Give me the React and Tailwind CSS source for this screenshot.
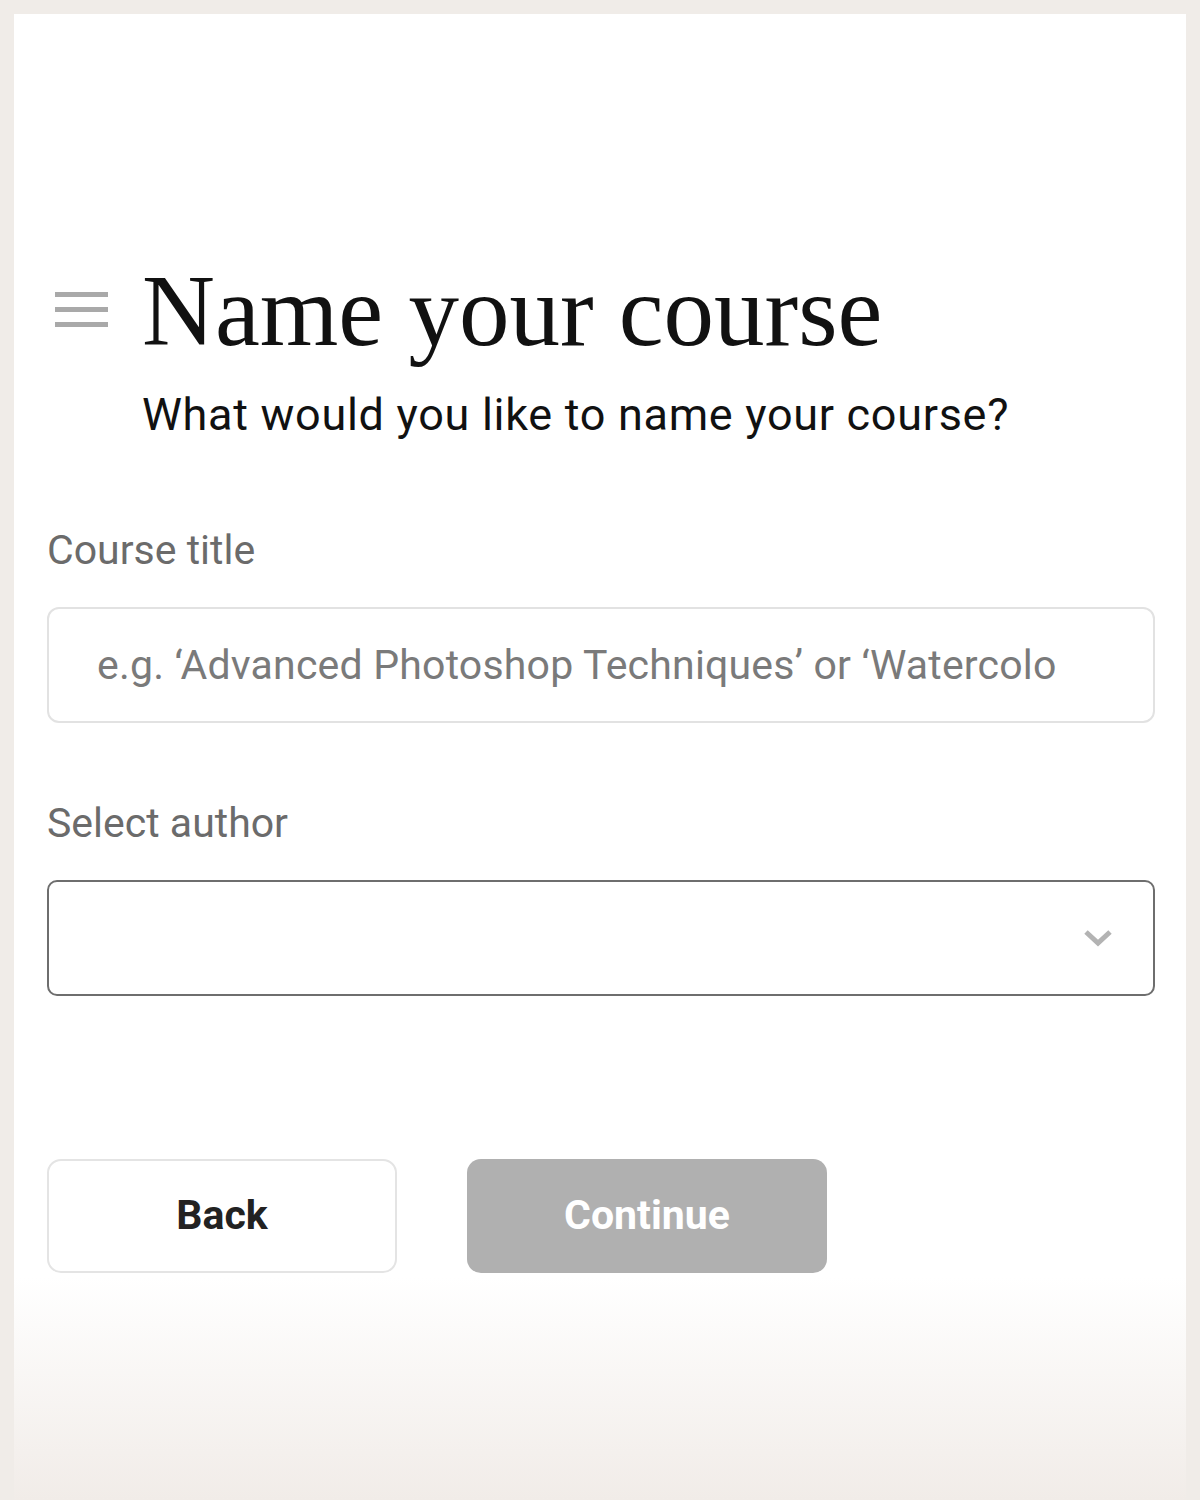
export default function App() {
  return (
    <div className="min-h-[1500px] bg-[#f0ece8] px-[14px] pt-[14px] font-['Roboto','Liberation_Sans',sans-serif]">
      <div className="h-[1486px] bg-[linear-gradient(to_bottom,#ffffff_85%,#f1ece8_100%)] pl-[33px] pr-[31px] pt-[247px]">
        {/* header */}
        <div className="flex items-start">
          <div className="ml-[8px] mt-[31px] flex w-[53px] flex-col gap-[10px]">
            <span className="h-[5px] w-full bg-[#a9a9a9]" />
            <span className="h-[5px] w-full bg-[#a9a9a9]" />
            <span className="h-[5px] w-full bg-[#a9a9a9]" />
          </div>
          <div className="ml-[34px] flex flex-col">
            <h1 className="font-['Liberation_Serif',serif] text-[101px] leading-none text-[#111]">
              Name your course
            </h1>
            <p className="mt-[30px] text-[45px] leading-none tracking-[0.7px] text-[#111]">
              What would you like to name your course?
            </p>
          </div>
        </div>

        {/* course title */}
        <label className="mt-[93px] block text-[41px] leading-none text-[#6b6b6b]">Course title</label>
        <div className="mt-[36px] flex h-[116px] items-center overflow-hidden rounded-[12px] border-2 border-[#e2e2e2] pl-[48px]">
          <span className="whitespace-nowrap text-[41px] leading-none tracking-[0.2px] text-[#7a7a7a]">
            e.g. ‘Advanced Photoshop Techniques’ or ‘Watercolo
          </span>
        </div>

        {/* author */}
        <label className="mt-[80px] block text-[41px] leading-none text-[#6b6b6b]">Select author</label>
        <div className="mt-[36px] flex h-[116px] items-center justify-end rounded-[10px] border-2 border-[#6e6e6e] pr-[40px]">
          <svg width="30" height="20" viewBox="0 0 30 20" fill="none">
            <path d="M3 4 L15 15 L27 4" stroke="#b3b3b3" strokeWidth="5" />
          </svg>
        </div>

        {/* buttons */}
        <div className="mt-[163px] flex gap-[70px]">
          <button className="flex h-[114px] w-[350px] items-center justify-center rounded-[14px] border-2 border-[#e4e4e4] bg-white text-[41px] font-bold text-[#222]">
            Back
          </button>
          <button className="flex h-[114px] w-[360px] items-center justify-center rounded-[14px] bg-[#b0b0b0] text-[41px] font-bold text-white">
            Continue
          </button>
        </div>
      </div>
    </div>
  );
}
